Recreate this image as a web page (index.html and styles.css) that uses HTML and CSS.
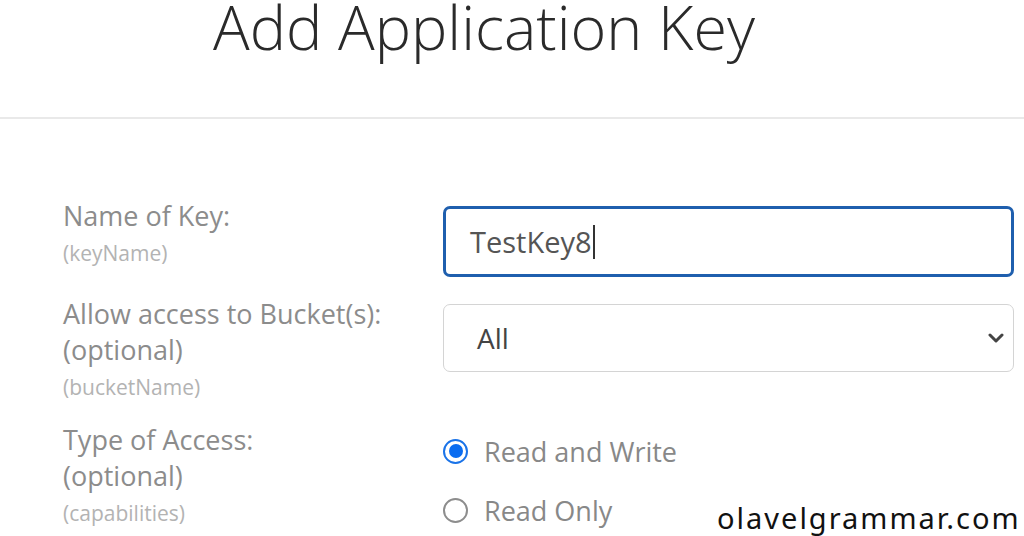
FILE: index.html
```html
<!DOCTYPE html>
<html lang="en">
<head>
<meta charset="utf-8">
<title>Add Application Key</title>
<link rel="stylesheet" href="styles.css">
</head>
<body>
<header class="header">
  <h1 class="title">Add Application Key</h1>
</header>
<main class="form">
  <div class="row row-first">
    <div class="label">
      <div class="label-main">Name of Key:</div>
      <div class="label-sub">(keyName)</div>
    </div>
    <div class="control">
      <div class="text-input"><span class="value">TestKey8</span><span class="caret"></span></div>
    </div>
  </div>
  <div class="row">
    <div class="label">
      <div class="label-main">Allow access to Bucket(s):</div>
      <div class="label-main">(optional)</div>
      <div class="label-sub">(bucketName)</div>
    </div>
    <div class="control">
      <div class="select-box">
        <span class="select-value">All</span>
        <svg class="chevron" width="16" height="10" viewBox="0 0 16 10"><path d="M2 2 L8 8 L14 2" fill="none" stroke="#444" stroke-width="3" stroke-linecap="round" stroke-linejoin="round"/></svg>
      </div>
    </div>
  </div>
  <div class="row">
    <div class="label">
      <div class="label-main">Type of Access:</div>
      <div class="label-main">(optional)</div>
      <div class="label-sub">(capabilities)</div>
    </div>
    <div class="control radios">
      <div class="radio-row">
        <span class="radio checked"><span class="dot"></span></span>
        <span class="radio-label">Read and Write</span>
      </div>
      <div class="radio-row">
        <span class="radio"></span>
        <span class="radio-label">Read Only</span>
      </div>
    </div>
  </div>
</main>
<div class="watermark">olavelgrammar.com</div>
</body>
</html>
```

FILE: styles.css
```css
html, body {
  margin: 0;
  padding: 0;
  background: #ffffff;
  overflow: hidden;
}
body {
  width: 1024px;
  height: 536px;
  position: relative;
  font-family: "Open Sans", "Noto Sans", sans-serif;
}
.header {
  display: flow-root;
  height: 117px;
  border-bottom: 2px solid #e9e9e9;
  padding-left: 213px;
  box-sizing: content-box;
}
.title {
  margin: -4px 0 0 0;
  font-size: 61px;
  line-height: 62px;
  font-weight: 300;
  color: #2a2a2a;
}
.form {
  padding: 79px 0 0 63px;
}
.row {
  display: flex;
  margin-bottom: 20px;
}
.row-first {
  margin-bottom: 19px;
}
.label {
  width: 380px;
  flex: none;
}
.label-main {
  font-size: 27px;
  line-height: 36px;
  color: #8c8c8c;
}
.label-sub {
  padding-top: 4px;
  font-size: 21px;
  line-height: 30px;
  color: #b3b3b3;
}
.control {
  width: 571px;
  padding-top: 8px;
}
.text-input {
  box-sizing: border-box;
  height: 71px;
  border: 3px solid #1f5fae;
  border-radius: 7px;
  display: flex;
  align-items: center;
  padding-left: 24px;
  font-size: 29px;
  color: #555;
}
.caret {
  display: inline-block;
  width: 2px;
  height: 34px;
  background: #333;
  margin-left: 1px;
}
.select-box {
  box-sizing: border-box;
  height: 68px;
  border: 1.5px solid #d4d4d4;
  border-radius: 7px;
  display: flex;
  align-items: center;
  justify-content: space-between;
  padding: 0 9px 0 33px;
  font-size: 28px;
  color: #444;
}
.chevron {
  display: block;
}
.radios {
  padding-top: 17px;
  display: flex;
  flex-direction: column;
  gap: 35px;
}
.radio-row {
  display: flex;
  align-items: center;
  height: 24px;
}
.radio {
  box-sizing: border-box;
  width: 25px;
  height: 25px;
  border: 2px solid #8d8d8d;
  border-radius: 50%;
  display: flex;
  align-items: center;
  justify-content: center;
  margin-right: 16px;
}
.radio.checked {
  border: 2.5px solid #1a73e8;
}
.dot {
  width: 14px;
  height: 14px;
  border-radius: 50%;
  background: #0a6cf0;
}
.radio-label {
  font-size: 27px;
  color: #888;
}
.watermark {
  position: absolute;
  left: 717px;
  top: 498px;
  font-family: "Noto Sans", sans-serif;
  font-size: 29px;
  letter-spacing: 2px;
  line-height: 40px;
  color: #111;
}
```
